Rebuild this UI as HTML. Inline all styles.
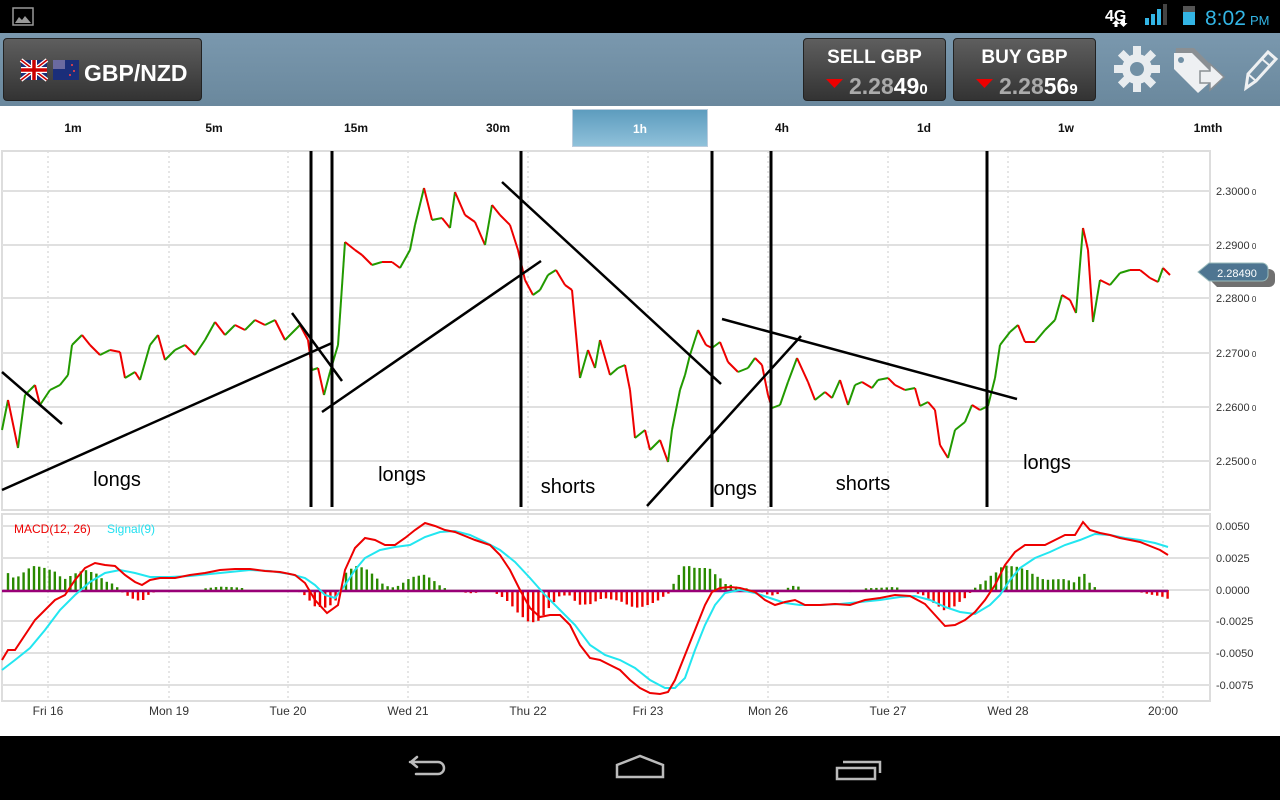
<!DOCTYPE html>
<html><head><meta charset="utf-8"><style>
*{margin:0;padding:0;box-sizing:border-box}
body{width:1280px;height:800px;overflow:hidden;background:#fff;font-family:"Liberation Sans",sans-serif;position:relative}
#sb{position:absolute;left:0;top:0;width:1280px;height:33px;background:#000}
#hd{position:absolute;left:0;top:33px;width:1280px;height:73px;background:linear-gradient(#7a98ae,#6a889d)}
.btn{position:absolute;top:5px;height:63px;border-radius:4px;background:linear-gradient(#5e5e5e,#333);border:1px solid #222;color:#fff;font-weight:bold}
#tf{position:absolute;top:107px;left:0;width:1280px;height:42px}
#tf div{position:absolute;top:0;height:42px;line-height:42px;width:142px;text-align:center;font-size:12px;font-weight:bold;color:#111}
#nav{position:absolute;left:0;top:736px;width:1280px;height:64px;background:#000}
svg text{font-family:"Liberation Sans",sans-serif}
</style></head><body>
<div id="sb">
<svg width="1280" height="33">
<rect x="13" y="8" width="20" height="17" fill="none" stroke="#999" stroke-width="1.5"/><path d="M15 23 L19 17 L22 20 L25 16 L31 23Z" fill="#999"/>
<text x="1105" y="21" fill="#fff" font-size="16" font-weight="bold">4G</text>
<path d="M1112 24l4-4 4 4h-2.5v3h-3v-3zM1122 20h3v3h2.5l-4 4-4-4z" fill="#fff"/>
<rect x="1145" y="18" width="4" height="7" fill="#33b5e5"/><rect x="1151" y="14" width="4" height="11" fill="#33b5e5"/><rect x="1157" y="9" width="4" height="16" fill="#33b5e5"/><rect x="1163" y="4" width="4" height="21" fill="#444"/>
<rect x="1183" y="6" width="12" height="19" fill="#555"/><rect x="1183" y="12" width="12" height="13" fill="#33b5e5"/>
<text x="1205" y="25" fill="#33b5e5" font-size="21">8:02</text><text x="1250" y="25" fill="#33b5e5" font-size="13">PM</text>
</svg></div>
<div id="hd">
<div class="btn" style="left:3px;width:199px">
<svg width="199" height="63" style="position:absolute;left:0;top:0">
<rect x="17" y="21" width="26" height="20" fill="#1a2e7a"/><path d="M17 21L43 41M43 21L17 41" stroke="#fff" stroke-width="4"/><path d="M17 21L43 41M43 21L17 41" stroke="#c00" stroke-width="1.5"/><path d="M30 21V41M17 31H43" stroke="#fff" stroke-width="6"/><path d="M30 21V41M17 31H43" stroke="#c00" stroke-width="3.5"/>
<rect x="49" y="21" width="26" height="20" fill="#1a2e7a"/><rect x="49" y="21" width="12" height="9" fill="#6a6aa0"/><circle cx="68" cy="26" r="1" fill="#f44"/><circle cx="70" cy="32" r="1" fill="#f44"/><circle cx="66" cy="36" r="1" fill="#f44"/>
<text x="80" y="42" font-size="23" font-weight="bold" fill="#fff">GBP/NZD</text></svg></div>
<div class="btn" style="left:803px;width:143px">
<div style="position:absolute;top:8px;width:100%;text-align:center;font-size:19px">SELL GBP</div>
<svg width="143" height="63" style="position:absolute;left:0;top:0"><path d="M22 40h17l-8.5 9z" fill="#e00"/><text x="45" y="55" font-size="23" font-weight="bold" fill="#aaa">2.28<tspan fill="#fff">49</tspan><tspan font-size="15" fill="#fff">0</tspan></text></svg></div>
<div class="btn" style="left:953px;width:143px">
<div style="position:absolute;top:8px;width:100%;text-align:center;font-size:19px">BUY GBP</div>
<svg width="143" height="63" style="position:absolute;left:0;top:0"><path d="M22 40h17l-8.5 9z" fill="#e00"/><text x="45" y="55" font-size="23" font-weight="bold" fill="#aaa">2.28<tspan fill="#fff">56</tspan><tspan font-size="15" fill="#fff">9</tspan></text></svg></div>
<svg width="180" height="73" style="position:absolute;left:1100px;top:0">
<g transform="translate(37,36)" fill="#e8ecef"><circle r="15"/><g id="t"><rect x="-4" y="-23" width="8" height="10"/></g><use href="#t" transform="rotate(45)"/><use href="#t" transform="rotate(90)"/><use href="#t" transform="rotate(135)"/><use href="#t" transform="rotate(180)"/><use href="#t" transform="rotate(225)"/><use href="#t" transform="rotate(270)"/><use href="#t" transform="rotate(315)"/><circle r="7" fill="#7190a5"/></g>
<path d="M76 15h18l24 24-20 18-24-24z" fill="#8a8f93"/><path d="M74 20h18l24 24-18 16-24-24z" fill="#eef0f2"/><circle cx="81" cy="27" r="3" fill="#7190a5"/>
<path d="M100 38h10v-7l14 13-14 13v-7h-10z" fill="#eef0f2" stroke="#8a8f93" stroke-width="1.5"/>
<path d="M146 55l2-14 20-22 8 7-20 22z" fill="none" stroke="#eef0f2" stroke-width="3"/><path d="M148 41l8 7M162 26l7 6" stroke="#eef0f2" stroke-width="2"/>
</svg>
</div>
<div id="tf">
<div style="left:2px">1m</div><div style="left:143px">5m</div><div style="left:285px">15m</div><div style="left:427px">30m</div>
<div style="left:572px;top:2px;width:136px;height:38px;line-height:38px;background:linear-gradient(#5d9cbe,#8fc1da);border:1px solid #bcd;color:#fff">1h</div>
<div style="left:711px">4h</div><div style="left:853px">1d</div><div style="left:995px">1w</div><div style="left:1137px">1mth</div>
</div>
<svg id="ch" width="1280" height="590" viewBox="0 150 1280 590" style="position:absolute;left:0;top:150px"></svg>
<div id="nav"><svg width="1280" height="64">
<path d="M410 26h28a6 6 0 0 1 0 12h-22M411 26l6-5M411 26l6 5" fill="none" stroke="#bbb" stroke-width="2.5" stroke-linecap="round"/>
<path d="M617 41V29l23-9 23 9v12z" fill="none" stroke="#bbb" stroke-width="2.5"/>
<path d="M837 32h38v11h-38zM843 26h37v11" fill="none" stroke="#bbb" stroke-width="2.5"/>
</svg></div>
<script>
var S='';
function L(x1,y1,x2,y2,c,w,d){S+='<line x1="'+x1+'" y1="'+y1+'" x2="'+x2+'" y2="'+y2+'" stroke="'+c+'" stroke-width="'+w+'"'+(d?' stroke-dasharray="'+d+'"':'')+'/>';}
function T(x,y,t,s,c,a){S+='<text x="'+x+'" y="'+y+'" font-size="'+s+'" fill="'+c+'"'+(a?' text-anchor="'+a+'"':'')+'>'+t+'</text>';}
S+='<rect x="2" y="151" width="1208" height="359" fill="none" stroke="#ddd" stroke-width="2"/>';
S+='<rect x="2" y="514" width="1208" height="187" fill="none" stroke="#ddd" stroke-width="2"/>';
[191,245,298,353,407,461].forEach(function(y,i){L(2,y,1210,y,'#e0e0e0',2);T(1216,y+4,(2.30-i*0.01).toFixed(4)+'<tspan font-size="8"> 0</tspan>',11,'#333');});
[[526,'0.0050'],[558,'0.0025'],[590,'0.0000'],[621,'-0.0025'],[653,'-0.0050'],[685,'-0.0075']].forEach(function(a){L(2,a[0],1210,a[0],'#e0e0e0',2);T(1216,a[0]+4,a[1],11,'#333');});
[[48,'Fri 16'],[169,'Mon 19'],[288,'Tue 20'],[408,'Wed 21'],[528,'Thu 22'],[648,'Fri 23'],[768,'Mon 26'],[888,'Tue 27'],[1008,'Wed 28'],[1163,'20:00']].forEach(function(a){L(a[0],151,a[0],700,'#ddd',1.5,'2,3');T(a[0],715,a[1],12,'#333','middle');});
var P=[[2,430],[8,400],[18,448],[25,395],[35,385],[40,405],[50,390],[60,385],[68,375],[72,345],[82,335],[90,345],[100,355],[110,350],[120,352],[125,378],[135,372],[140,380],[150,345],[158,335],[165,360],[175,350],[185,345],[195,355],[205,340],[215,322],[225,335],[235,325],[245,330],[255,320],[265,325],[275,320],[285,340],[300,325],[308,340],[312,370],[318,368],[324,395],[330,372],[338,345],[345,242],[355,250],[362,255],[372,265],[382,262],[392,262],[400,268],[410,250],[415,225],[424,188],[432,220],[442,218],[450,228],[455,192],[465,215],[475,222],[485,245],[492,205],[500,215],[510,225],[518,250],[525,280],[533,295],[540,290],[548,275],[556,270],[565,285],[572,290],[580,378],[588,350],[595,368],[600,340],[610,375],[618,368],[625,365],[630,390],[635,438],[645,430],[650,450],[660,440],[668,462],[672,430],[680,390],[685,375],[690,355],[698,330],[706,345],[712,348],[720,342],[728,362],[738,372],[748,368],[755,358],[762,365],[768,395],[772,408],[780,405],[788,382],[797,358],[808,382],[815,400],[825,392],[832,398],[840,380],[848,405],[855,385],[862,382],[872,388],[878,380],[888,378],[895,385],[905,390],[915,388],[920,406],[928,402],[935,410],[940,445],[948,458],[955,430],[965,422],[972,405],[980,410],[988,406],[995,378],[1000,345],[1010,332],[1018,325],[1025,342],[1035,342],[1045,330],[1055,320],[1062,295],[1070,300],[1076,313],[1083,228],[1088,250],[1093,322],[1100,280],[1110,285],[1120,273],[1130,270],[1140,270],[1150,278],[1158,282],[1163,268],[1170,275]];
for(var i=1;i<P.length;i++)L(P[i-1][0],P[i-1][1],P[i][0],P[i][1],P[i][1]<P[i-1][1]?'#229a00':'#e00',2);
var M=[[2,660],[8,650],[15,650],[25,635],[35,620],[45,610],[55,600],[65,595],[75,580],[85,568],[95,563],[105,565],[115,566],[125,575],[135,582],[142,585],[150,580],[160,578],[175,578],[190,575],[205,573],[220,570],[235,569],[250,569],[265,571],[280,572],[295,575],[305,583],[315,600],[327,613],[338,605],[345,570],[355,548],[365,538],[375,540],[385,545],[395,545],[405,538],[415,530],[425,523],[435,526],[445,530],[455,532],[465,536],[475,540],[490,545],[500,555],[510,570],[520,590],[530,608],[540,617],[550,615],[560,615],[570,625],[580,645],[590,658],[600,660],[610,665],[620,670],[630,680],[640,688],[650,693],[660,694],[668,692],[675,680],[685,655],[695,630],[705,605],[712,592],[720,588],[730,587],[740,588],[755,592],[765,600],[775,605],[785,602],[795,600],[805,605],[820,605],[835,604],[850,605],[865,600],[880,598],[895,595],[910,596],[925,604],[935,615],[945,626],[955,625],[965,620],[975,612],[985,600],[995,585],[1005,565],[1015,552],[1025,545],[1035,545],[1045,545],[1055,540],[1065,535],[1075,535],[1083,522],[1090,530],[1100,533],[1110,535],[1120,538],[1130,540],[1140,542],[1150,546],[1160,550],[1168,555]];
var G=[[2,670],[15,660],[30,648],[45,630],[60,610],[75,595],[90,582],[105,573],[120,570],[135,573],[150,577],[170,577],[190,576],[210,574],[230,572],[250,570],[270,571],[290,574],[305,578],[315,585],[325,595],[335,598],[345,585],[355,570],[365,558],[380,550],[395,547],[410,545],[425,537],[440,532],[455,531],[470,535],[485,542],[500,550],[515,562],[530,578],[545,595],[560,610],[575,625],[590,645],[605,655],[620,660],[635,668],[650,680],[665,688],[675,688],[685,678],[695,650],[705,625],[715,605],[725,593],[740,590],[755,593],[770,598],[785,603],[800,605],[820,605],[840,604],[860,602],[880,600],[900,597],[915,596],[930,600],[945,607],[960,612],[975,614],[990,605],[1000,595],[1010,580],[1020,568],[1035,558],[1050,552],[1065,545],[1080,540],[1095,534],[1110,535],[1125,538],[1140,540],[1155,543],[1168,547]];
function I(A,x){for(var i=1;i<A.length;i++)if(A[i][0]>=x){var a=A[i-1],b=A[i];return a[1]+(b[1]-a[1])*(x-a[0])/(b[0]-a[0]);}return A[A.length-1][1];}
for(var x=8;x<1168;x+=5.2){var h=(I(G,x)-I(M,x))*1.1;if(Math.abs(h)<1.5)continue;S+='<rect x="'+(x-1.2).toFixed(1)+'" y="'+(h>0?590-h:590).toFixed(1)+'" width="2.4" height="'+Math.abs(h).toFixed(1)+'" fill="'+(h>0?'#2a8a00':'#e00')+'"/>';}
L(2,591,1168,591,'#990077',2.5);
function PL(A,c){S+='<polyline fill="none" stroke="'+c+'" stroke-width="2" points="'+A.map(function(p){return p.join(',')}).join(' ')+'"/>';}
PL(G,'#22e6f0');PL(M,'#ee0000');
T(14,533,'MACD(12, 26)',12,'#e00');T(107,533,'Signal(9)',12,'#22e0f0');
[311,332,521,712,771,987].forEach(function(x){L(x,151,x,507,'#000',3);});
[[2,372,62,424],[2,490,332,343],[292,313,342,381],[322,412,541,261],[502,182,721,384],[647,506,801,336],[722,319,1017,399]].forEach(function(a){L(a[0],a[1],a[2],a[3],'#000',2.5);});
[[117,486,'longs'],[402,481,'longs'],[568,493,'shorts'],[733,495,'longs'],[863,490,'shorts'],[1047,469,'longs']].forEach(function(a){T(a[0],a[1],a[2],20,'#000','middle');});
S+='<path d="M1203 274l10-8h52a6 6 0 0 1 6 6v6a6 6 0 0 1-6 6h-52z" fill="#111" transform="translate(4,3)" opacity=".6"/><path d="M1198 272l11-9h53a6 6 0 0 1 6 6v6a6 6 0 0 1-6 6h-53z" fill="#4e7591" stroke="#9bb" stroke-width="1"/>';
T(1237,277,'2.28490',11,'#fff','middle');
document.getElementById('ch').innerHTML=S;
</script>
</body></html>
